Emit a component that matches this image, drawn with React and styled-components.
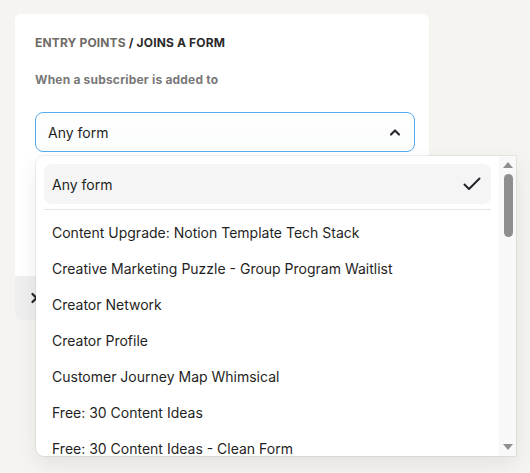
import React from "react";
import styled, { createGlobalStyle } from "styled-components";

const Global = createGlobalStyle`
  html, body { margin: 0; padding: 0; }
  body {
    background: #f5f4f1;
    font-family: Inter, "Noto Sans", "Liberation Sans", sans-serif;
    -webkit-font-smoothing: antialiased;
  }
`;

const Page = styled.div`
  width: 530px;
  height: 473px;
  padding: 14px 0 0 15px;
  box-sizing: border-box;
  overflow: hidden;
`;

const Card = styled.div`
  width: 414px;
  background: #ffffff;
  border-radius: 6px;
  display: flex;
  flex-direction: column;
`;

const Body = styled.div`
  padding: 21px 14px 0 20px;
  height: 262px;
  box-sizing: border-box;
  display: flex;
  flex-direction: column;
`;

const Crumbs = styled.div`
  font-size: 12px;
  line-height: 16px;
  font-weight: 700;
  letter-spacing: 0.15px;
  text-transform: uppercase;
  color: #6f6b66;
`;

const CrumbCurrent = styled.span`
  color: #2b2b2b;
`;

const Label = styled.div`
  margin-top: 21px;
  font-size: 12px;
  line-height: 16px;
  font-weight: 700;
  letter-spacing: 0.2px;
  color: #787878;
`;

const SelectWrap = styled.div`
  position: relative;
  margin-top: 24px;
  width: 380px;
`;

const SelectBox = styled.div`
  height: 40px;
  box-sizing: border-box;
  border: 1px solid #56acf2;
  border-radius: 8px;
  background: linear-gradient(#ffffff, #fbfcfc);
  display: flex;
  align-items: center;
  justify-content: space-between;
  padding: 0 13px 0 12px;
  font-size: 14px;
  color: #1e1e22;
`;

const Menu = styled.div`
  position: absolute;
  top: 44px;
  left: 1px;
  width: 480px;
  height: 300px;
  background: #ffffff;
  border-radius: 8px 0 0 8px;
  box-shadow: 0 0 0 1px rgba(0, 0, 0, 0.06), 0 8px 22px rgba(0, 0, 0, 0.08);
  display: flex;
  overflow: hidden;
  z-index: 2;
`;

const List = styled.div`
  flex: 1;
  padding: 8px 8px 0 8px;
  overflow: hidden;
  display: flex;
  flex-direction: column;
`;

const Option = styled.div`
  flex: none;
  height: ${(p) => (p.$selected ? "40px" : "36px")};
  border-radius: 8px;
  background: ${(p) => (p.$selected ? "#f5f5f5" : "transparent")};
  display: flex;
  align-items: center;
  justify-content: space-between;
  padding: 0 10px 0 8px;
  font-size: 14px;
  color: #1f1f24;
  white-space: nowrap;
`;

const Divider = styled.div`
  flex: none;
  height: 1px;
  background: #e6e6e6;
  margin: 5px 0 4px;
`;

const Scrollbar = styled.div`
  width: 17px;
  flex: none;
  background: #f8f8f8;
  display: flex;
  flex-direction: column;
  align-items: center;
  padding: 6px 0 6px 1px;
  box-sizing: border-box;
`;

const Thumb = styled.div`
  width: 9px;
  height: 63px;
  margin-top: 6px;
  border-radius: 5px;
  background: #8e8e8e;
`;

const Spacer = styled.div`
  flex: 1;
`;

const Footer = styled.div`
  height: 44px;
  background: #efefef;
  border-radius: 0 0 6px 6px;
  display: flex;
  align-items: center;
  padding-left: 13px;
`;

const Chevron = ({ dir, size = 12, color = "#2a2a2f", width = 2.2 }) => (
  <svg width={size} height={size} viewBox="0 0 12 12" fill="none">
    <path
      d={dir === "up" ? "M2 8.5 L6 4.5 L10 8.5" : "M4.5 2 L8.5 6 L4.5 10"}
      stroke={color}
      strokeWidth={width}
      strokeLinecap="round"
      strokeLinejoin="round"
    />
  </svg>
);

const Check = () => (
  <svg width="18" height="18" viewBox="0 0 18 18" fill="none">
    <path
      d="M1.5 9.5 L6 14 L16.5 3.5"
      stroke="#24242c"
      strokeWidth="2"
      strokeLinecap="round"
      strokeLinejoin="round"
    />
  </svg>
);

const Arrow = ({ down }) => (
  <svg width="10" height="6" viewBox="0 0 10 6">
    <path d={down ? "M0 0 H10 L5 6 Z" : "M0 6 H10 L5 0 Z"} fill="#8f8f8f" />
  </svg>
);

const forms = [
  "Content Upgrade: Notion Template Tech Stack",
  "Creative Marketing Puzzle - Group Program Waitlist",
  "Creator Network",
  "Creator Profile",
  "Customer Journey Map Whimsical",
  "Free: 30 Content Ideas",
  "Free: 30 Content Ideas - Clean Form",
];

export default function App() {
  return (
    <>
      <Global />
      <Page>
        <Card>
          <Body>
            <Crumbs>
              Entry points <CrumbCurrent>/ Joins a form</CrumbCurrent>
            </Crumbs>
            <Label>When a subscriber is added to</Label>
            <SelectWrap>
              <SelectBox>
                <span>Any form</span>
                <Chevron dir="up" size={12} />
              </SelectBox>
              <Menu>
                <List>
                  <Option $selected>
                    <span>Any form</span>
                    <Check />
                  </Option>
                  <Divider />
                  {forms.map((f) => (
                    <Option key={f}>{f}</Option>
                  ))}
                </List>
                <Scrollbar>
                  <Arrow />
                  <Thumb />
                  <Spacer />
                  <Arrow down />
                </Scrollbar>
              </Menu>
            </SelectWrap>
          </Body>
          <Footer>
            <Chevron dir="right" size={12} width={2.4} />
          </Footer>
        </Card>
      </Page>
    </>
  );
}
